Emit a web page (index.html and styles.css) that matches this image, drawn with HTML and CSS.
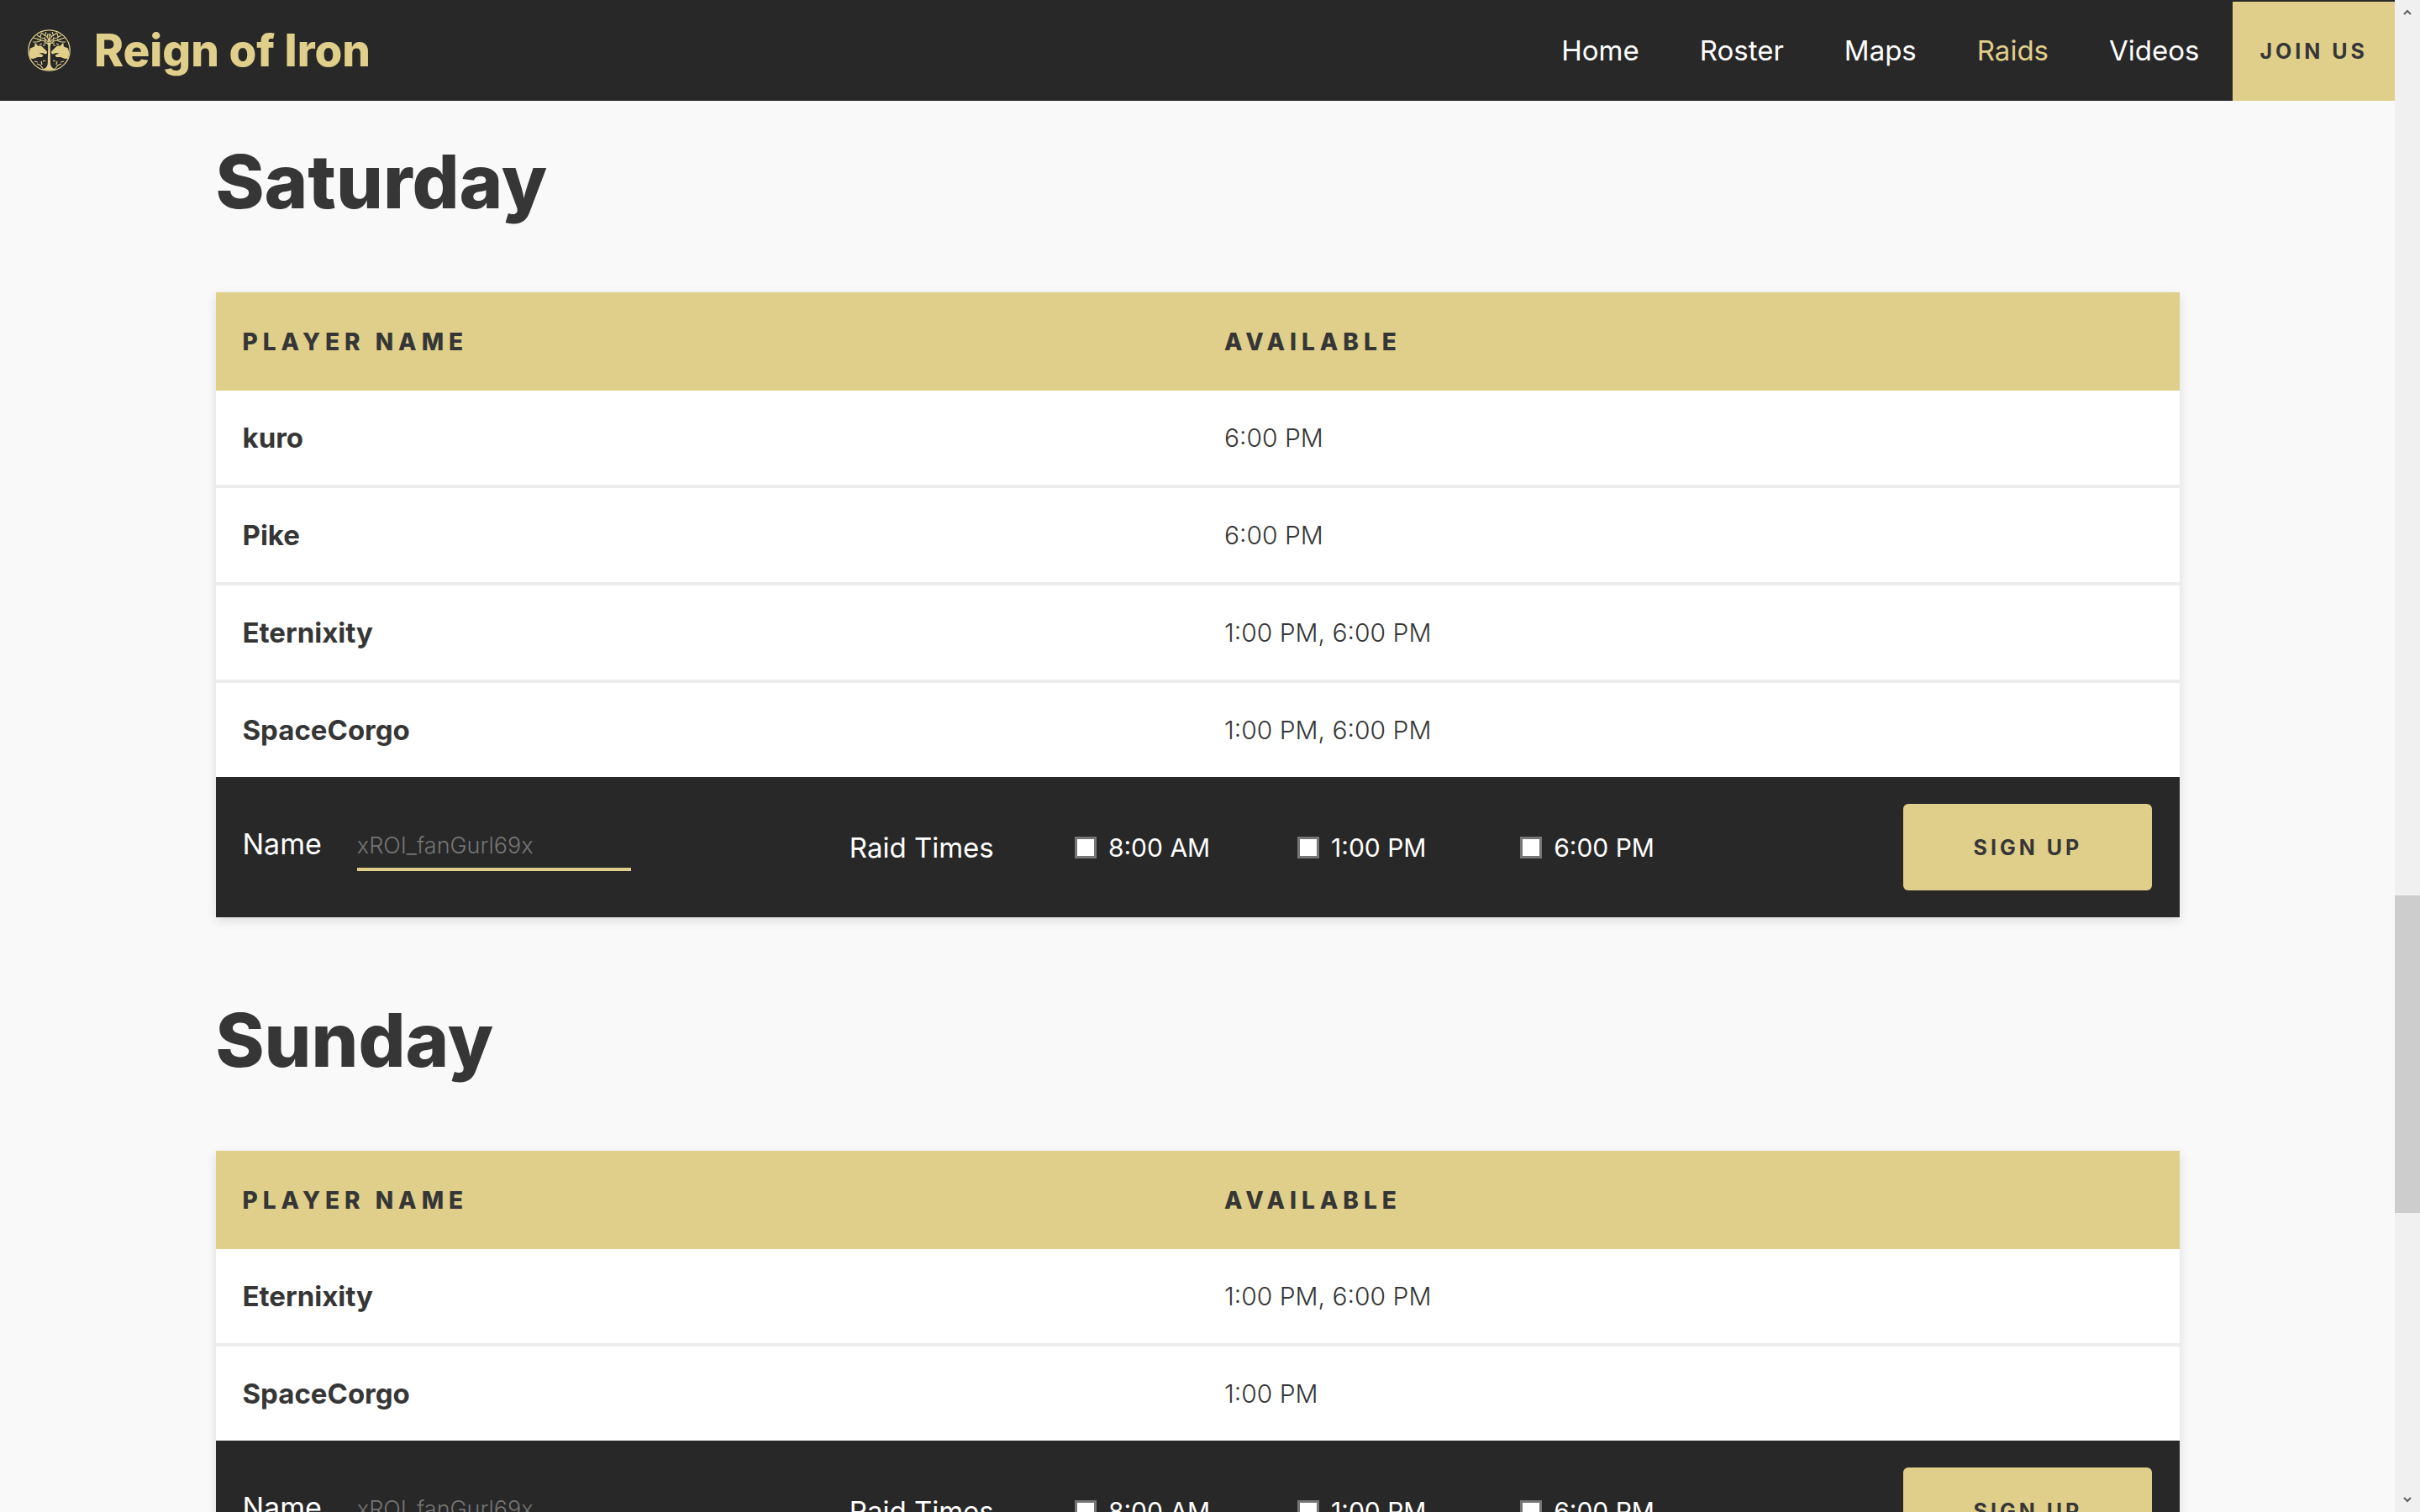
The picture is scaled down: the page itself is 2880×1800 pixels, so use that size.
FILE: index.html
```html
<!DOCTYPE html>
<html lang="en">
<head>
<meta charset="utf-8">
<title>Reign of Iron</title>
<link rel="stylesheet" href="styles.css">
</head>
<body>
<div class="page">
  <header class="navbar">
    <a class="brand" href="#">
      <svg class="brand-logo" viewBox="0 0 51 50" fill="none" stroke="currentColor" aria-hidden="true">
        <ellipse cx="25.500" cy="25" rx="24.700" ry="24.200" stroke-width="1.300"/>
        <path fill="currentColor" stroke="none" d="M24.300 16h2.400l.3 24c.1 3 1.200 5 3.400 6.500l5 .6c-5 2.200-15 2.200-20 0l5-.6c2.200-1.500 3.300-3.500 3.400-6.500z"/>
        <g id="half">
          <path fill="currentColor" stroke="none" d="M3 22.500l5-2 .8-5 3.200 4h4l6.700 6.500.3 2-1.500 1.500-4-1.500-4 .5 5 2-1.500 2.500h-5l-5.500 2-3.500-.5c-1.500-4-1.500-8 0-12z"/>
          <path stroke-width="1.100" d="M25 20c-1-4-4-6-8-7L7 10M25 18c-.4-4-4-7-9-8l-5-3M25 15c0-4-2-7-6-9l-3-2M25.500 14V5M17 13l-6 2H6M15 9l1-4M20 8l2-5M21 14l-1-5M16 12h-5M23 10l1-5"/>
          <path stroke-width="1.200" d="M14 18l3-1M18 19.500l3-1.500M19 16l3 .5M8 38l4 1M11 41l4 1.500 3 4M16 38l1 4M21 37l-3 1"/>
        </g>
        <use href="#half" transform="matrix(-1 0 0 1 51 0)"/>
      </svg>
      <span class="brand-name">Reign of Iron</span>
    </a>
    <nav class="menu">
      <a class="menu-link" href="#">Home</a>
      <a class="menu-link" href="#">Roster</a>
      <a class="menu-link" href="#">Maps</a>
      <a class="menu-link active" href="#" aria-current="page">Raids</a>
      <a class="menu-link" href="#">Videos</a>
    </nav>
    <a class="join" href="#">JOIN US</a>
  </header>

  <main class="content">
    <section class="day">
      <h1 class="day-title">Saturday</h1>
      <div class="card">
        <table class="roster">
          <thead><tr><th scope="col">PLAYER NAME</th><th scope="col">AVAILABLE</th></tr></thead>
          <tbody>
            <tr><th scope="row">kuro</th><td>6:00 PM</td></tr>
            <tr><th scope="row">Pike</th><td>6:00 PM</td></tr>
            <tr><th scope="row">Eternixity</th><td>1:00 PM, 6:00 PM</td></tr>
            <tr><th scope="row">SpaceCorgo</th><td>1:00 PM, 6:00 PM</td></tr>
          </tbody>
        </table>
        <form class="signup">
          <div class="field">
            <label for="sat-name">Name</label>
            <input class="name-input" id="sat-name" type="text" placeholder="xROI_fanGurl69x">
          </div>
          <span>Raid Times</span>
          <label class="time"><input class="check" type="checkbox">8:00 AM</label>
          <label class="time"><input class="check" type="checkbox">1:00 PM</label>
          <label class="time"><input class="check" type="checkbox">6:00 PM</label>
          <button class="submit" type="submit">SIGN UP</button>
        </form>
      </div>
    </section>

    <section class="day">
      <h1 class="day-title">Sunday</h1>
      <div class="card">
        <table class="roster">
          <thead><tr><th scope="col">PLAYER NAME</th><th scope="col">AVAILABLE</th></tr></thead>
          <tbody>
            <tr><th scope="row">Eternixity</th><td>1:00 PM, 6:00 PM</td></tr>
            <tr><th scope="row">SpaceCorgo</th><td>1:00 PM</td></tr>
          </tbody>
        </table>
        <form class="signup">
          <div class="field">
            <label for="sun-name">Name</label>
            <input class="name-input" id="sun-name" type="text" placeholder="xROI_fanGurl69x">
          </div>
          <span>Raid Times</span>
          <label class="time"><input class="check" type="checkbox">8:00 AM</label>
          <label class="time"><input class="check" type="checkbox">1:00 PM</label>
          <label class="time"><input class="check" type="checkbox">6:00 PM</label>
          <button class="submit" type="submit">SIGN UP</button>
        </form>
      </div>
    </section>
  </main>
</div>
<div class="scrollbar" aria-hidden="true">
  <svg class="arrow" viewBox="0 0 10 8"><path d="M1 6l4-4 4 4"/></svg>
  <div class="track"><div class="thumb"></div></div>
  <svg class="arrow" viewBox="0 0 10 8"><path d="M1 2l4 4 4-4"/></svg>
</div>
</body>
</html>
```
FILE: styles.css
```css
:root {
  --gold: #e0cf8a;
  --dark: #282828;
  --ink: #363636;
}

* { box-sizing: border-box; }

body {
  margin: 0;
  height: 100vh;
  overflow: hidden;
  display: grid;
  grid-template-columns: minmax(0, 1fr) 30px;
  background: #f9f9f9;
  color: var(--ink);
  font: 400 33px/48px Inter, "Liberation Sans", sans-serif;
}

a { color: inherit; text-decoration: none; }

.page { overflow: hidden; height: 100vh; }

.navbar {
  display: flex;
  align-items: stretch;
  height: 120px;
  background: var(--dark);
  color: #fff;
}

.brand {
  display: flex;
  align-items: center;
  gap: 28px;
  margin-right: auto;
  padding-left: 33px;
  color: var(--gold);
}
.brand-logo { width: 51px; height: 50px; }
.brand-name { font-size: 53px; font-weight: 800; }

.menu {
  display: flex;
  align-items: center;
  gap: 72px;
  padding-right: 40px;
}
.menu-link.active { color: var(--gold); }

.join {
  display: flex;
  align-items: center;
  margin-top: 2px;
  padding: 0 32px;
  background: var(--gold);
  color: var(--ink);
  font-size: 25px;
  font-weight: 700;
  letter-spacing: 4px;
}

.content { padding: 0 9%; }

.day-title {
  margin: 0;
  padding: 36px 0 72px;
  font-size: 88px;
  line-height: 120px;
  font-weight: 800;
}
.day + .day { padding-top: 50px; }

.card {
  background: #fff;
  box-shadow: 0 4px 12px rgba(0, 0, 0, 0.12);
}

.roster {
  width: 100%;
  border-collapse: collapse;
  table-layout: fixed;
}
.roster th,
.roster td {
  padding: 32px;
  text-align: left;
}
.roster thead th {
  height: 117px;
  background: var(--gold);
  font-size: 28px;
  font-weight: 800;
  letter-spacing: 6px;
}
.roster td {
  font-size: 30px;
  font-weight: 300;
}
.roster tbody tr + tr { border-top: 4px solid #ececec; }

.signup {
  display: grid;
  grid-template-columns: 722fr 268fr 265fr 265fr 456fr 296fr;
  align-items: center;
  padding: 32px;
  background: var(--dark);
  color: #fff;
}

.field {
  display: flex;
  align-items: flex-start;
  gap: 42px;
  font-size: 34px;
}

.name-input {
  width: 326px;
  height: 56px;
  padding: 0;
  border: 0;
  border-bottom: 4px solid var(--gold);
  background: transparent;
  color: #fff;
  font: inherit;
  font-size: 27px;
  font-weight: 300;
}
.name-input::placeholder { color: #757575; }

.time {
  display: flex;
  align-items: center;
  gap: 14px;
  font-size: 30px;
}
.check {
  appearance: none;
  width: 26px;
  height: 26px;
  margin: 0;
  border: 3px solid #767676;
  background: #fff;
}

.submit {
  height: 103px;
  border: 0;
  border-radius: 6px;
  background: var(--gold);
  color: var(--ink);
  font: inherit;
  font-size: 25px;
  font-weight: 700;
  letter-spacing: 4px;
}

.scrollbar {
  display: flex;
  flex-direction: column;
  align-items: center;
  height: 100vh;
  padding: 11px 0;
  gap: 11px;
  background: #f0f0f0;
}
.arrow {
  width: 10px;
  height: 8px;
  fill: none;
  stroke: #606060;
  stroke-width: 2;
}
.track {
  flex: 1;
  width: 100%;
  display: grid;
  grid-template-rows: 1036fr 378fr 326fr;
}
.thumb {
  grid-row: 2;
  background: #cdcdcd;
}
```
